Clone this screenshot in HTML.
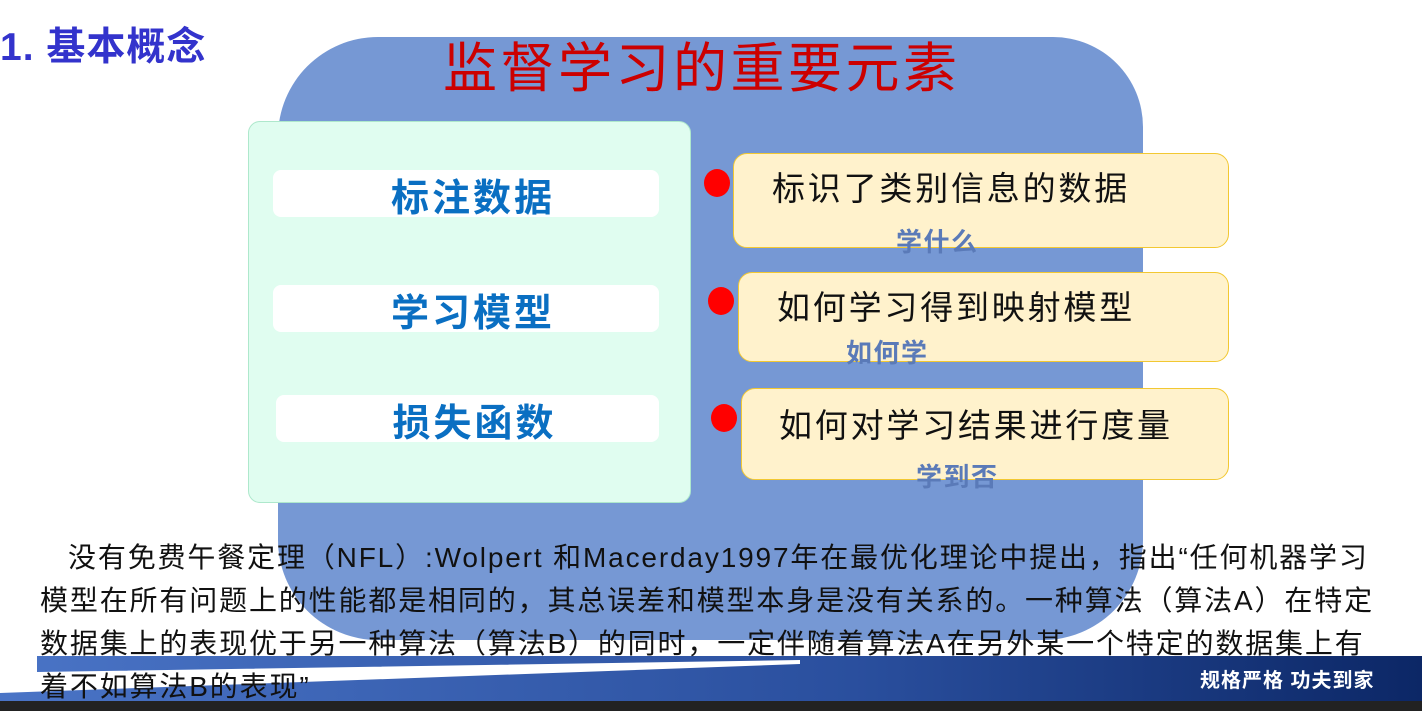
<!DOCTYPE html>
<html><head><meta charset="utf-8"><style>
body{margin:0;width:1422px;height:711px;overflow:hidden;background:#fff;position:relative;font-family:"Liberation Sans","Noto Sans CJK SC",sans-serif}
.a{position:absolute}
.big{left:278px;top:37px;width:865px;height:603px;background:#7698d4;border-radius:100px 90px 100px 100px}
.lb{left:248px;top:121px;width:441px;height:380px;background:#e0fdf0;border:1px solid #aee8cc;border-radius:12px}
.wb{background:#fff;border-radius:8px;color:#0a6fc2;font-weight:bold;font-size:38px;text-align:center;line-height:58px;height:47px;letter-spacing:3px;text-indent:14px}
.rb{background:#fff2cc;border:1px solid #f2c832;border-radius:14px;right:193px}
.rt{position:absolute;font-size:33px;color:#111;white-space:nowrap;letter-spacing:2.8px}
.st{position:absolute;font-size:26px;font-weight:bold;color:#5a7ab8;white-space:nowrap;letter-spacing:1.5px}
.dot{width:26px;height:28px;border-radius:50%;background:#f00}
.p{left:40px;top:536px;font-size:28px;line-height:43px;color:#111;letter-spacing:1.85px;white-space:nowrap}
</style></head><body>
<div class="a big"></div>
<div class="a" style="left:0;top:16px;font-size:39px;font-weight:bold;color:#3333cc;letter-spacing:1px">1. 基本概念</div>
<div class="a" style="left:443px;top:24px;font-size:54px;color:#cc0000;letter-spacing:3.5px">监督学习的重要元素</div>
<div class="a lb"></div>
<div class="a wb" style="left:273px;top:170px;width:386px">标注数据</div>
<div class="a wb" style="left:273px;top:285px;width:386px">学习模型</div>
<div class="a wb" style="left:276px;top:395px;width:383px">损失函数</div>
<div class="a rb" style="left:733px;top:153px;height:93px"><span class="rt" style="left:38px;top:8px">标识了类别信息的数据</span><span class="st" style="left:162px;top:68px">学什么</span></div>
<div class="a rb" style="left:738px;top:272px;height:88px"><span class="rt" style="left:38px;top:8px">如何学习得到映射模型</span><span class="st" style="left:107px;top:60px">如何学</span></div>
<div class="a rb" style="left:741px;top:388px;height:90px"><span class="rt" style="left:37px;top:10px">如何对学习结果进行度量</span><span class="st" style="left:174px;top:68px">学到否</span></div>
<div class="a dot" style="left:704px;top:169px"></div>
<div class="a dot" style="left:708px;top:287px"></div>
<div class="a dot" style="left:711px;top:404px"></div>
<svg class="a" style="left:0;top:650px" width="1422" height="61">
<defs><linearGradient id="g" x1="0" x2="1"><stop offset="0" stop-color="#4a74c6"/><stop offset="0.6" stop-color="#2a4f9e"/><stop offset="1" stop-color="#0c2766"/></linearGradient></defs>
<rect x="0" y="6" width="1422" height="45" fill="url(#g)"/>
<polygon points="0,0 37,0 37,22 800,10 800,14 0,43" fill="#fff"/>
<rect x="0" y="51" width="1422" height="10" fill="#222"/>
<text x="1200" y="37" font-size="20" font-weight="bold" fill="#fff" font-family="Liberation Sans,Noto Sans CJK SC,sans-serif" letter-spacing="1">规格严格  功夫到家</text>
</svg>
<div class="a p"><span style="padding-left:28px"></span>没有免费午餐定理（NFL）:Wolpert 和Macerday1997年在最优化理论中提出，指出“任何机器学习<br>模型在所有问题上的性能都是相同的，其总误差和模型本身是没有关系的。一种算法（算法A）在特定<br>数据集上的表现优于另一种算法（算法B）的同时，一定伴随着算法A在另外某一个特定的数据集上有<br>着不如算法B的表现”</div>
</body></html>
